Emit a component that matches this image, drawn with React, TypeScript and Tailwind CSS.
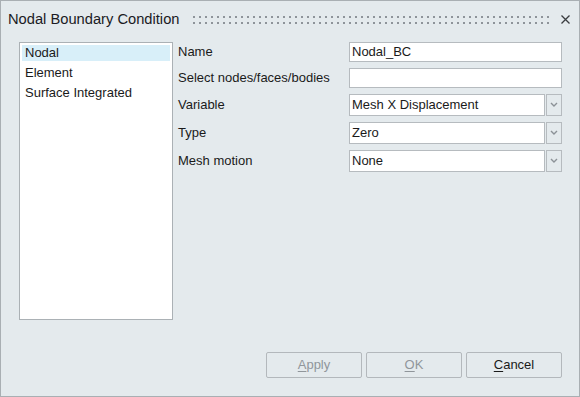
import React from 'react';

const listItems = ['Nodal', 'Element', 'Surface Integrated'];

function Chevron() {
  return (
    <svg width="8" height="6" viewBox="0 0 8 6" className="text-[#8c9297]">
      <path d="M1 1 L4 4 L7 1" fill="none" stroke="currentColor" strokeWidth="1.4" />
    </svg>
  );
}

function TextField({ value, h }: { value?: string; h: string }) {
  return (
    <div className={`${h} w-full border border-[#b6bbbf] bg-white pl-[2px] flex items-center`}>
      {value}
    </div>
  );
}

function Dropdown({ value }: { value: string }) {
  return (
    <div className="h-[22px] w-full flex gap-[1px]">
      <div className="flex-1 border border-[#b6bbbf] bg-white pl-[2px] flex items-center">{value}</div>
      <div className="w-[16px] border border-[#b6bbbf] flex items-center justify-center">
        <Chevron />
      </div>
    </div>
  );
}

function DialogButton({ letter, rest, disabled }: { letter: string; rest: string; disabled?: boolean }) {
  return (
    <button
      className={`w-[96px] h-[26px] border border-[#b3b8bc] rounded-[2px] bg-[#e4eaed] text-[13px] ${
        disabled ? 'text-[#90969b]' : 'text-[#1a1a1a]'
      }`}
    >
      <span className="underline underline-offset-2">{letter}</span>
      {rest}
    </button>
  );
}

export default function App() {
  return (
    <div className="w-[580px] h-[397px] bg-[#e4eaed] border border-[#a9afb3] flex flex-col font-['Liberation_Sans',Arial,sans-serif] text-[13px] text-[#1a1a1a]">
      {/* Title bar */}
      <div className="h-[41px] flex items-center pb-[4px] pl-[7px] pr-[9px]">
        <span className="text-[14.7px] text-[#1b1b24]">Nodal Boundary Condition</span>
        <svg className="ml-[14px] flex-1 h-[8px]" height="8">
          <defs>
            <pattern id="grip" width="6" height="6" patternUnits="userSpaceOnUse">
              <rect x="0" y="0" width="2" height="2" fill="#8e949a" />
            </pattern>
          </defs>
          <rect x="0" y="0" width="100%" height="8" fill="url(#grip)" />
        </svg>
        <svg className="ml-[10px]" width="9" height="9" viewBox="0 0 9 9">
          <path d="M0.5 0.5 L8.5 8.5 M8.5 0.5 L0.5 8.5" stroke="#3a3d40" strokeWidth="1.3" />
        </svg>
      </div>

      {/* Body */}
      <div className="flex pl-[18px] pr-[17px]">
        <div className="w-[154px] h-[278px] border border-[#abb1b5] bg-white p-[2px] flex flex-col gap-[4px]">
          {listItems.map((item, i) => (
            <div key={item} className={`h-[16px] leading-[16px] pl-[3px] ${i === 0 ? 'bg-[#d8eff9]' : ''}`}>
              {item}
            </div>
          ))}
        </div>

        <div className="ml-[5px] flex-1 flex flex-col">
          <div className="flex h-[20px] items-center">
            <div className="w-[171px]">Name</div>
            <div className="flex-1"><TextField value="Nodal_BC" h="h-[20px]" /></div>
          </div>
          <div className="flex h-[20px] items-center mt-[6px]">
            <div className="w-[171px]">Select nodes/faces/bodies</div>
            <div className="flex-1"><TextField h="h-[20px]" /></div>
          </div>
          <div className="flex h-[22px] items-center mt-[6px]">
            <div className="w-[171px]">Variable</div>
            <div className="flex-1"><Dropdown value="Mesh X Displacement" /></div>
          </div>
          <div className="flex h-[22px] items-center mt-[6px]">
            <div className="w-[171px]">Type</div>
            <div className="flex-1"><Dropdown value="Zero" /></div>
          </div>
          <div className="flex h-[22px] items-center mt-[6px]">
            <div className="w-[171px]">Mesh motion</div>
            <div className="flex-1"><Dropdown value="None" /></div>
          </div>
        </div>
      </div>

      {/* Buttons */}
      <div className="mt-[32px] flex justify-end gap-[4px] pr-[17px]">
        <DialogButton letter="A" rest="pply" disabled />
        <DialogButton letter="O" rest="K" disabled />
        <DialogButton letter="C" rest="ancel" />
      </div>
    </div>
  );
}
